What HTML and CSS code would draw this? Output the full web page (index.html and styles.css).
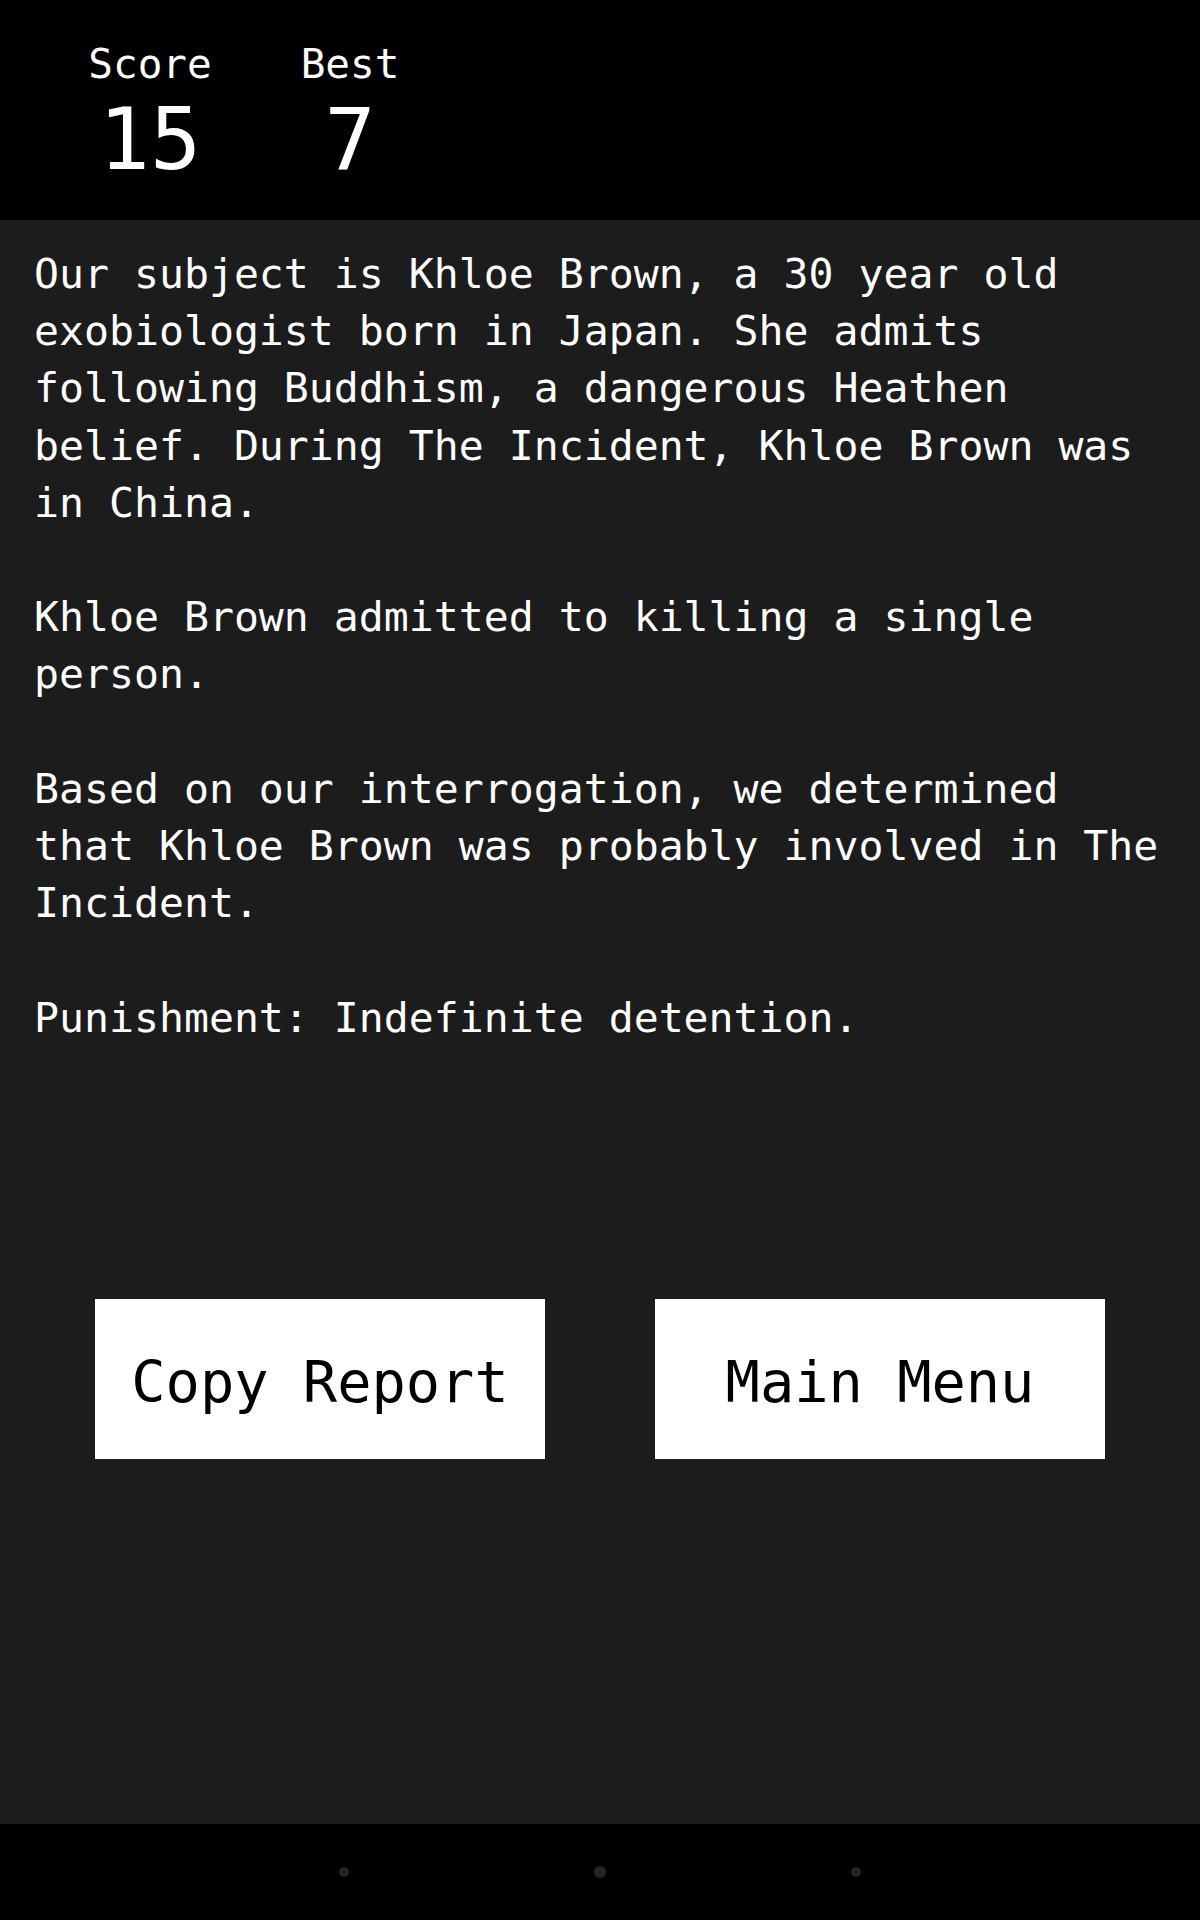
FILE: index.html
```html
<!DOCTYPE html>
<html>
<head>
<meta charset="utf-8">
<link rel="stylesheet" href="styles.css">
</head>
<body>
<div class="screen">
  <header class="header">
    <div class="stat">
      <div class="stat-label">Score</div>
      <div class="stat-value">15</div>
    </div>
    <div class="stat">
      <div class="stat-label">Best</div>
      <div class="stat-value">7</div>
    </div>
  </header>
  <main class="main">
    <div class="report">
      <p>Our subject is Khloe Brown, a 30 year old exobiologist born in Japan. She admits following Buddhism, a dangerous Heathen belief. During The Incident, Khloe Brown was in China.</p>
      <p>Khloe Brown admitted to killing a single person.</p>
      <p>Based on our interrogation, we determined that Khloe Brown was probably involved in The Incident.</p>
      <p>Punishment: Indefinite detention.</p>
    </div>
    <div class="actions">
      <button class="btn">Copy Report</button>
      <button class="btn">Main Menu</button>
    </div>
  </main>
  <footer class="navbar">
    <span class="dot dot-small"></span>
    <span class="dot dot-big"></span>
    <span class="dot dot-small"></span>
  </footer>
</div>
</body>
</html>
```
FILE: styles.css
```css
* { box-sizing: border-box; }
html, body {
  margin: 0;
  padding: 0;
  background: #1c1c1c;
}
body {
  font-family: "DejaVu Sans Mono", "Liberation Mono", monospace;
  color: #ffffff;
}
.screen {
  width: 1200px;
  height: 1920px;
  display: flex;
  flex-direction: column;
}
.header {
  height: 220px;
  background: #000000;
  display: flex;
  padding: 39px 0 0 50px;
}
.stat {
  width: 200px;
  text-align: center;
}
.stat-label {
  font-size: 41px;
  line-height: 50px;
}
.stat-value {
  font-size: 85px;
  line-height: 88px;
  margin-top: 7px;
}
.main {
  flex: 1;
  background: #1c1c1c;
  display: flex;
  flex-direction: column;
}
.report {
  padding: 25px 34px 0 34px;
  font-size: 41.5px;
  line-height: 57.2px;
}
.report p {
  margin: 0 0 57.2px 0;
}
.report p:last-child {
  margin-bottom: 0;
}
.actions {
  margin-top: 253px;
  display: flex;
  justify-content: center;
  gap: 110px;
}
.btn {
  width: 450px;
  height: 160px;
  background: #ffffff;
  color: #000000;
  border: none;
  border-radius: 0;
  padding: 7px 0 0 0;
  font-family: "DejaVu Sans Mono", "Liberation Mono", monospace;
  font-size: 57px;
  line-height: 1;
}
.navbar {
  height: 96px;
  background: #000000;
  display: flex;
  align-items: center;
  justify-content: center;
  gap: 245px;
}
.dot {
  display: block;
  border-radius: 50%;
  background: #262626;
}
.dot-small {
  width: 10px;
  height: 10px;
}
.dot-big {
  width: 12px;
  height: 12px;
}
```
